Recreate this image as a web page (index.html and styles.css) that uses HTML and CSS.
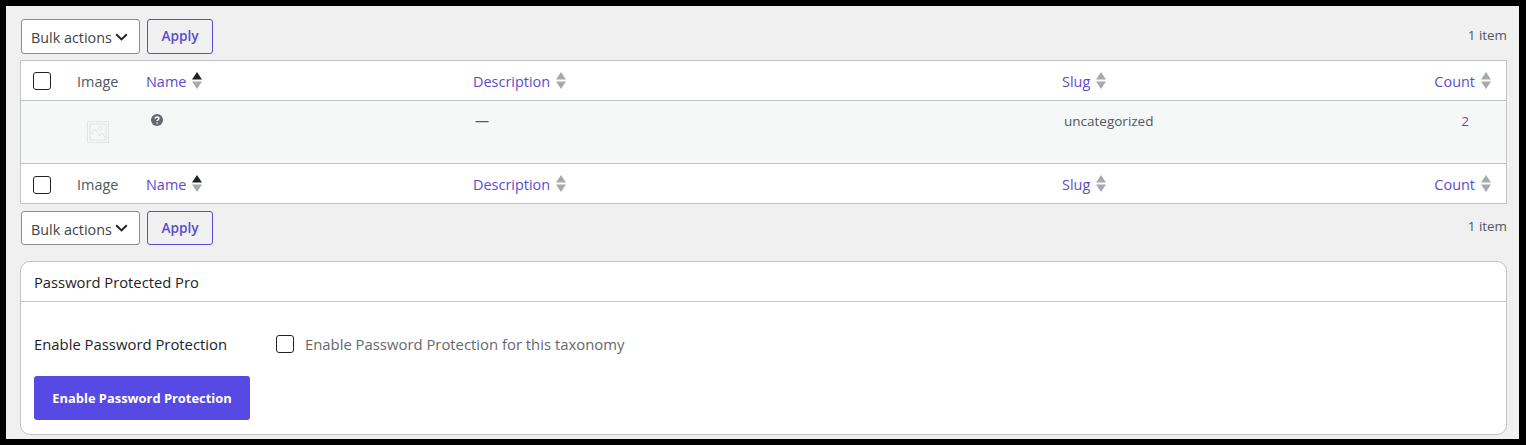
FILE: index.html
```html
<!DOCTYPE html>
<html lang="en">
<head>
<meta charset="utf-8">
<title>Categories</title>
<link rel="stylesheet" href="styles.css">
</head>
<body>
<div class="frame">
  <div class="toolbar">
    <div class="select"><span>Bulk actions</span><svg class="chev" viewBox="0 0 13 8"><path d="M1.2 1.2 6.5 6.4 11.8 1.2" /></svg></div>
    <button class="apply">Apply</button>
    <span class="count">1 item</span>
  </div>
  <table class="list">
    <colgroup><col class="c-check"><col class="c-image"><col class="c-name"><col class="c-desc"><col class="c-slug"><col class="c-count"></colgroup>
    <thead>
      <tr>
        <th><span class="check"></span></th>
        <th class="plain">Image</th>
        <th><span class="sort">Name<svg class="arrows" viewBox="0 0 10 18" preserveAspectRatio="none"><path class="up dark" d="M5 0 10 8H0z"/><path class="down" d="M0 10H10L5 18z"/></svg></span></th>
        <th><span class="sort">Description<svg class="arrows" viewBox="0 0 10 18" preserveAspectRatio="none"><path class="up" d="M5 0 10 8H0z"/><path class="down" d="M0 10H10L5 18z"/></svg></span></th>
        <th><span class="sort">Slug<svg class="arrows" viewBox="0 0 10 18" preserveAspectRatio="none"><path class="up" d="M5 0 10 8H0z"/><path class="down" d="M0 10H10L5 18z"/></svg></span></th>
        <th class="right"><span class="sort">Count<svg class="arrows" viewBox="0 0 10 18" preserveAspectRatio="none"><path class="up" d="M5 0 10 8H0z"/><path class="down" d="M0 10H10L5 18z"/></svg></span></th>
      </tr>
    </thead>
    <tbody>
      <tr>
        <td></td>
        <td><svg class="thumb" viewBox="0 0 22 22"><rect x="0.5" y="0.5" width="21" height="21"/><rect x="3" y="3" width="16" height="16"/><path d="M3 14 8 8l5 7 2-3 4 5"/><circle cx="13.500" cy="7.500" r="1.800"/></svg></td>
        <td><svg class="help" viewBox="0 0 12 12"><circle cx="6" cy="6" r="6"/><path d="M4.100 4.600C4.200 3.500 5 3 6 3c1.100 0 1.900.6 1.900 1.500 0 1.400-1.800 1.300-1.800 2.600"/><circle class="dot" cx="6.100" cy="9" r=".8"/></svg></td>
        <td class="dash">—</td>
        <td class="slug">uncategorized</td>
        <td class="num"><a>2</a></td>
      </tr>
    </tbody>
    <tfoot>
      <tr>
        <th><span class="check"></span></th>
        <th class="plain">Image</th>
        <th><span class="sort">Name<svg class="arrows" viewBox="0 0 10 18" preserveAspectRatio="none"><path class="up dark" d="M5 0 10 8H0z"/><path class="down" d="M0 10H10L5 18z"/></svg></span></th>
        <th><span class="sort">Description<svg class="arrows" viewBox="0 0 10 18" preserveAspectRatio="none"><path class="up" d="M5 0 10 8H0z"/><path class="down" d="M0 10H10L5 18z"/></svg></span></th>
        <th><span class="sort">Slug<svg class="arrows" viewBox="0 0 10 18" preserveAspectRatio="none"><path class="up" d="M5 0 10 8H0z"/><path class="down" d="M0 10H10L5 18z"/></svg></span></th>
        <th class="right"><span class="sort">Count<svg class="arrows" viewBox="0 0 10 18" preserveAspectRatio="none"><path class="up" d="M5 0 10 8H0z"/><path class="down" d="M0 10H10L5 18z"/></svg></span></th>
      </tr>
    </tfoot>
  </table>
  <div class="toolbar lower">
    <div class="select"><span>Bulk actions</span><svg class="chev" viewBox="0 0 13 8"><path d="M1.2 1.2 6.5 6.4 11.8 1.2" /></svg></div>
    <button class="apply">Apply</button>
    <span class="count">1 item</span>
  </div>
  <section class="card">
    <h2 class="card-title">Password Protected Pro</h2>
    <div class="card-body">
      <div class="field">
        <span class="field-label">Enable Password Protection</span>
        <span class="check"></span>
        <span class="field-help">Enable Password Protection for this taxonomy</span>
      </div>
      <button class="primary">Enable Password Protection</button>
    </div>
  </section>
</div>
</body>
</html>
```
FILE: styles.css
```css
* { box-sizing: border-box; }
html, body { margin: 0; height: 100%; background: #000; }
body { padding: 6px 7px 6px 6px; font-family: "Open Sans", "Noto Sans", sans-serif; color: #3c434a; }
.frame {
  height: 433px;
  background: #f0f0f1;
  padding: 13px 12px 0 14px;
}
.toolbar { display: flex; align-items: flex-start; gap: 7px; height: 35px; margin-left: 1px; }
.lower { height: 34px; margin-top: 7px; }
.select {
  width: 119px; height: 100%;
  display: flex; align-items: center; justify-content: space-between;
  padding: 1px 11px 0 9px;
  background: #fff; border: 1px solid #8c8f94; border-radius: 3px;
  font-size: 14.35px; color: #3c434a;
}
.lower .select { padding-top: 2px; }
.chev { width: 13px; height: 8px; fill: none; stroke: #1d2327; stroke-width: 2; }
.lower .chev { margin-top: -3px; }
.apply {
  width: 66px; height: 100%;
  background: #f0f0f1; border: 1px solid #5b4ccf; border-radius: 3px;
  color: #5b4ccf; font: 600 13.7px "Open Sans", sans-serif; padding: 0 0 2px;
}
.lower .apply { padding-bottom: 1px; }
.count { margin-left: auto; font-size: 13.4px; line-height: 18px; margin-top: 7px; color: #50575e; }
.lower .count { margin-top: 6px; }
.list {
  width: 1487px; margin-top: 6px;
  border-collapse: separate; border-spacing: 0; table-layout: fixed;
  background: #fff; border: 1px solid #c3c4c7;
  font-size: 14.45px;
}
.c-check { width: 56px; } .c-image { width: 69px; } .c-name { width: 327px; } .c-desc { width: 589px; } .c-slug { width: 300px; } .c-count { width: 144px; }
.list th { padding: 2px 0 0; font-weight: 400; text-align: left; vertical-align: middle; }
.list thead th { height: 40px; border-bottom: 1px solid #c3c4c7; }
.list tfoot th { border-top: 1px solid #c3c4c7; height: 40px; }
.list th:first-child { padding: 0 0 0 12px; }
.list thead th:first-child { padding-bottom: 2px; }
.list .plain { color: #50575e; }
.list tbody td { height: 62px; padding: 0; background: #f6f7f7; vertical-align: top; }
.sort { display: inline-flex; align-items: center; gap: 6px; color: #5b4ccf; }
.list .right { text-align: right; padding-right: 15px; }
.arrows { width: 10px; height: 17px; margin-bottom: 2px; }
.up, .down { fill: #a7aaad; }
.up.dark { fill: #1d2327; }
.check {
  display: inline-block; width: 18px; height: 18px; vertical-align: middle;
  background: #fff; border: 1px solid #1d2327; border-radius: 3px;
}
.thumb { display: block; width: 22px; height: 22px; margin: 20px 0 0 10px; fill: none; stroke: #e2e4e5; stroke-width: 1; }
.help { display: block; width: 12px; height: 12px; margin: 13px 0 0 5px; fill: #646970; }
.help path { fill: none; stroke: #fff; stroke-width: 1.500; }
.help .dot { fill: #fff; }
.list .dash { padding: 10px 0 0 2px; line-height: 20px; font-size: 14px; color: #50575e; }
.list .slug { padding: 10px 0 0 2px; font-size: 13.5px; line-height: 20px; color: #50575e; }
.list .num { text-align: right; padding: 10px 37px 0 0; font-size: 13.5px; line-height: 20px; color: #5b4ccf; }
.card {
  width: 1487px; height: 174px; margin-top: 16px;
  background: #fff; border: 1px solid #c3c4c7; border-radius: 10px;
}
.card-title {
  margin: 0; height: 40px; padding: 0 13px;
  display: flex; align-items: center;
  font-size: 14.75px; font-weight: 400; color: #1d2327;
  border-bottom: 1px solid #c3c4c7;
}
.card-body { padding: 32px 13px 0; }
.field { display: flex; align-items: center; height: 20px; font-size: 14.85px; margin-bottom: 22px; }
.field-label { width: 242px; color: #1d2327; font-weight: 500; }
.field-help { margin-left: 11px; color: #646970; font-weight: 500; }
.primary {
  display: block; width: 216px; height: 44px;
  background: #5649e4; color: #fff; border: 0; border-radius: 3px;
  font: 700 12.9px "Open Sans", sans-serif;
}
```
